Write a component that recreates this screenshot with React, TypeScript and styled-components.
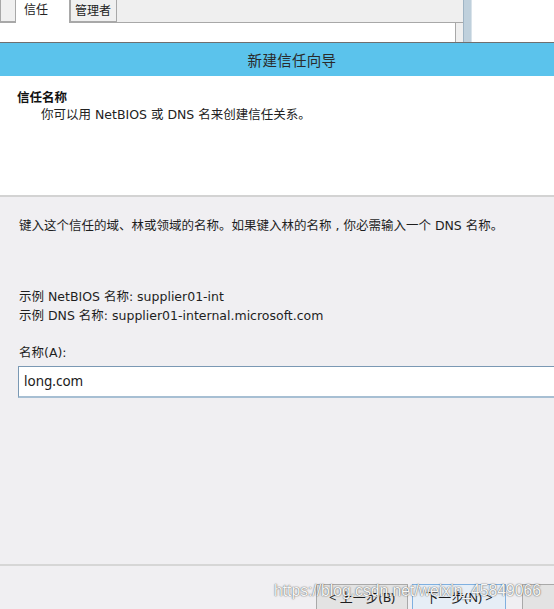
import React from 'react';
import styled, { createGlobalStyle } from 'styled-components';

const GlobalStyle = createGlobalStyle`
    html, body {
        margin: 0;
        padding: 0;
        width: 554px;
        height: 609px;
        overflow: hidden;
        background: #f0eff2;
    }
    * {
        box-sizing: border-box;
    }
`;

const FONT = `'DejaVu Sans', 'Noto Sans CJK SC', sans-serif`;

const Screen = styled.div`
    position: relative;
    width: 554px;
    height: 609px;
    display: flex;
    flex-direction: column;
    font-family: ${FONT};
    font-size: 12.5px;
    color: #1e1e1e;
    overflow: hidden;
`;

/* the properties dialog behind the wizard */
const Backdrop = styled.div`
    height: 43px;
    flex: none;
    display: flex;
    border-bottom: 1px solid #6f6f6f;
`;

const LeftPane = styled.div`
    width: 463px;
    background: #efefef;
    display: flex;
    flex-direction: column;
`;

const TabStrip = styled.div`
    height: 23px;
    display: flex;
    align-items: flex-end;
    border-bottom: 1px solid #a8a8a8;
`;

const Tab = styled.div<{ $active?: boolean; $width: number }>`
    width: ${({ $width }) => $width}px;
    height: ${({ $active }) => ($active ? 25 : 24)}px;
    margin-bottom: ${({ $active }) => ($active ? -1 : 0)}px;
    margin-right: ${({ $active }) => ($active ? 0 : -1)}px;
    background: ${({ $active }) => ($active ? '#ffffff' : '#f0f0f0')};
    border: 1px solid #a8a8a8;
    border-top: none;
    border-bottom: ${({ $active }) => ($active ? 'none' : '1px solid #a8a8a8')};
    padding: ${({ $active }) => ($active ? '3px 0 0 8px' : '4px 0 0 4px')};
    font-family: 'Noto Sans CJK SC', sans-serif;
    font-size: 12px;
    line-height: 16px;
    color: #222;
    position: relative;
    z-index: ${({ $active }) => ($active ? 1 : 0)};
`;

const TabPanel = styled.div`
    flex: 1;
    width: 456px;
    background: #ffffff;
    border-right: 1px solid #a8a8a8;
`;

const ScrollStrip = styled.div`
    width: 9px;
    background: #bfd0dc;
    border-left: 1px solid #9fb4c4;
    border-right: 1px solid #d9e3ea;
`;

const RightPane = styled.div`
    flex: 1;
    background: #ffffff;
`;

/* wizard */
const TitleBar = styled.div`
    height: 33px;
    flex: none;
    background: #5bc3ec;
    display: flex;
    align-items: center;
    justify-content: center;
    padding-left: 30px;
    font-family: 'Noto Sans CJK SC', sans-serif;
    font-size: 14.5px;
    color: #2a2a2a;
    letter-spacing: 0.3px;
`;

const Header = styled.div`
    height: 121px;
    flex: none;
    background: #ffffff;
    border-bottom: 2px solid #d3d3d3;
    padding: 13px 0 0 17px;
`;

const HeaderTitle = styled.div`
    font-weight: 700;
    line-height: 17px;
    color: #111;
`;

const HeaderSub = styled.div`
    padding-left: 24px;
    line-height: 17px;
    color: #222;
`;

const Body = styled.div`
    flex: none;
    height: 367px;
    background: #f0eff2;
    padding: 19px 0 0 19px;
    display: flex;
    flex-direction: column;
`;

const Paragraph = styled.div<{ $gap?: number }>`
    margin-bottom: ${({ $gap }) => $gap ?? 0}px;
    line-height: 19px;
    white-space: nowrap;
    color: #1e1e1e;
`;

const FieldLabel = styled.div`
    line-height: 18px;
    margin-bottom: 4px;
`;

const NameInput = styled.div`
    width: 560px;
    height: 32px;
    margin-left: -1px;
    background: #ffffff;
    border: 1px solid #7a98b4;
    border-bottom: 2px solid #a7bfd3;
    padding: 0 0 1px 5px;
    display: flex;
    align-items: center;
    font-family: 'Noto Sans', sans-serif;
    font-size: 13.5px;
    color: #1a1a1a;
`;

const Footer = styled.div`
    flex: 1;
    border-top: 2px solid #d6d6d6;
    background: #f0eff2;
    display: flex;
    align-items: flex-start;
    padding: 18px 0 0 316px;
    gap: 4px;
`;

const WizardButton = styled.div<{ $focused?: boolean; $width: number }>`
    width: ${({ $width }) => $width}px;
    height: 26px;
    flex: none;
    border: 1px solid ${({ $focused }) => ($focused ? '#7fb0e0' : '#a9a9a9')};
    background: ${({ $focused }) => ($focused ? '#e6eef6' : '#e3e3e3')};
    display: flex;
    align-items: center;
    justify-content: center;
    font-family: 'Noto Sans', 'Noto Sans CJK SC', sans-serif;
    font-size: 13px;
    color: #1e1e1e;
    padding-bottom: 2px;
`;

const Watermark = styled.div`
    position: absolute;
    left: 274px;
    top: 582px;
    font-family: 'Liberation Sans', Arial, sans-serif;
    font-size: 15.7px;
    color: #f6f6f6;
    text-shadow: 0 0 1px rgba(0, 0, 0, 0.6), 0 0 2px rgba(0, 0, 0, 0.35);
    white-space: nowrap;
`;

export default function App() {
    return (
        <Screen>
            <GlobalStyle />
            <Backdrop>
                <LeftPane>
                    <TabStrip>
                        <Tab $width={16} />
                        <Tab $active $width={55}>信任</Tab>
                        <Tab $width={47}>管理者</Tab>
                    </TabStrip>
                    <TabPanel />
                </LeftPane>
                <ScrollStrip />
                <RightPane />
            </Backdrop>

            <TitleBar>新建信任向导</TitleBar>

            <Header>
                <HeaderTitle>信任名称</HeaderTitle>
                <HeaderSub>你可以用 NetBIOS 或 DNS 名来创建信任关系。</HeaderSub>
            </Header>

            <Body>
                <Paragraph $gap={52}>
                    键入这个信任的域、林或领域的名称。如果键入林的名称 , 你必需输入一个 DNS 名称。
                </Paragraph>
                <Paragraph>示例 NetBIOS 名称: supplier01-int</Paragraph>
                <Paragraph $gap={19}>示例 DNS 名称: supplier01-internal.microsoft.com</Paragraph>
                <FieldLabel>名称(A):</FieldLabel>
                <NameInput>long.com</NameInput>
            </Body>

            <Footer>
                <WizardButton $width={92}>&lt; 上一步(B)</WizardButton>
                <WizardButton $focused $width={94}>下一步(N) &gt;</WizardButton>
                <WizardButton $width={40} style={{ marginLeft: 12 }} />
            </Footer>

            <Watermark>https://blog.csdn.net/weixin_45849066</Watermark>
        </Screen>
    );
}
